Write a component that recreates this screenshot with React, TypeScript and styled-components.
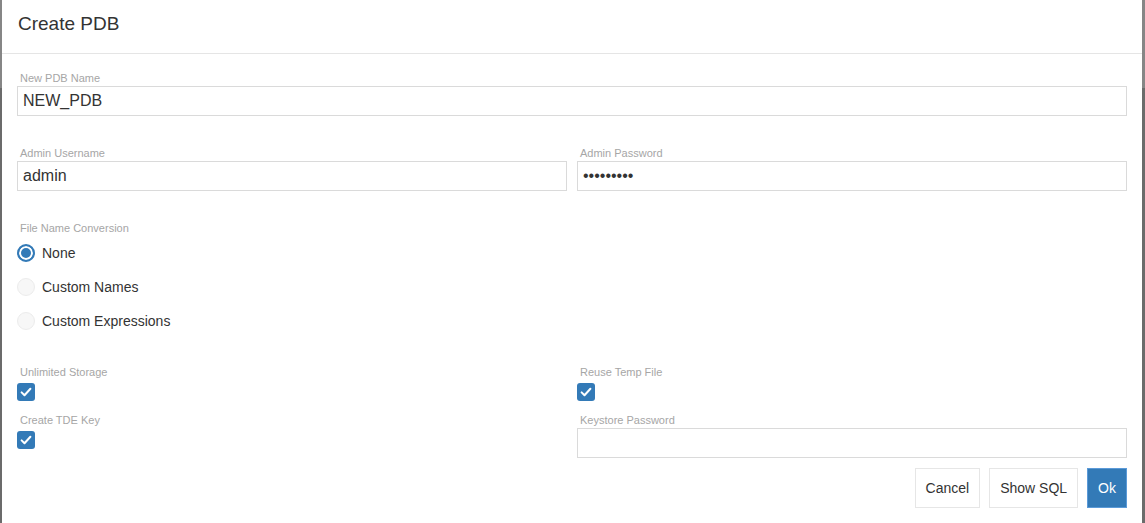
import React from "react";
import styled, { createGlobalStyle } from "styled-components";

const GlobalStyle = createGlobalStyle`
  html, body {
    margin: 0;
    padding: 0;
    background: #ffffff;
  }
  body {
    font-family: "Liberation Sans", Arial, Helvetica, sans-serif;
    color: #333333;
  }
  * { box-sizing: border-box; }
`;

const Frame = styled.div`
  height: 100vh;
  display: flex;
  padding: 0 3px 0 2px;
  background: linear-gradient(to bottom, #868686 0, #868686 88px, #6b6b6b 88px, #6b6b6b 100%);
`;

const Dialog = styled.div`
  flex: 1;
  background: #ffffff;
  display: flex;
  flex-direction: column;
  overflow: hidden;
`;

const Header = styled.div`
  padding: 10px 16px 16px;
  border-bottom: 1px solid #e5e5e5;
`;

const Title = styled.h4`
  margin: 0;
  font-size: 19px;
  line-height: 27px;
  font-weight: normal;
  color: #333333;
`;

const Body = styled.div`
  padding: 18px 15px 0;
  display: flex;
  flex-direction: column;
`;

const Section = styled.div<{ $mb?: number }>`
  margin-bottom: ${(p) => p.$mb ?? 0}px;
`;

const TwoCols = styled.div<{ $rowGap?: number }>`
  display: grid;
  grid-template-columns: 1fr 1fr;
  column-gap: 10px;
  row-gap: ${(p) => p.$rowGap ?? 0}px;
`;

const Field = styled.div`
  display: flex;
  flex-direction: column;
  align-items: flex-start;
`;

const Label = styled.label<{ $gap?: number }>`
  display: block;
  padding-left: 3px;
  font-size: 11px;
  line-height: 13px;
  color: #a6a6a6;
  margin-bottom: ${(p) => p.$gap ?? 1}px;
`;

const TextInput = styled.input`
  width: 100%;
  height: 30px;
  border: 1px solid #dadada;
  border-radius: 0;
  padding: 0 5px;
  font-family: "Liberation Sans", Arial, sans-serif;
  font-size: 16px;
  color: #333333;
  background: #ffffff;
  outline: none;
`;

const RadioList = styled.div`
  display: flex;
  flex-direction: column;
`;

const RadioRow = styled.label`
  height: 34px;
  display: flex;
  align-items: center;
  gap: 7px;
  font-size: 14px;
  color: #333333;
  cursor: pointer;
`;

const RadioDot = styled.span<{ $checked?: boolean }>`
  width: 18px;
  height: 18px;
  border-radius: 50%;
  flex: none;
  border: ${(p) => (p.$checked ? "2px solid #337ab7" : "1px solid #ececec")};
  background: ${(p) => (p.$checked ? "#337ab7" : "#f7f7f7")};
  box-shadow: ${(p) => (p.$checked ? "inset 0 0 0 2px #ffffff" : "none")};
`;

const CheckBox = styled.span`
  width: 18px;
  height: 18px;
  border-radius: 3px;
  background: #337ab7;
  display: flex;
  align-items: center;
  justify-content: center;
`;

const Footer = styled.div`
  margin-top: 10px;
  display: flex;
  justify-content: flex-end;
  gap: 9px;
`;

const Button = styled.button<{ $primary?: boolean }>`
  height: 40px;
  padding: 0 10px;
  font-family: "Liberation Sans", Arial, sans-serif;
  font-size: 14px;
  border-radius: 0;
  border: 1px solid ${(p) => (p.$primary ? "#5b9ad8" : "#e6e6e6")};
  background: ${(p) => (p.$primary ? "#337ab7" : "#ffffff")};
  color: ${(p) => (p.$primary ? "#ffffff" : "#333333")};
  cursor: pointer;
`;

const Check = () => (
  <CheckBox>
    <svg width="12" height="12" viewBox="0 0 12 12">
      <polyline
        points="1.6,6.4 4.5,9.2 10.4,2.8"
        fill="none"
        stroke="#ffffff"
        strokeWidth="2"
        strokeLinecap="round"
        strokeLinejoin="round"
      />
    </svg>
  </CheckBox>
);

export default function App() {
  const options = ["None", "Custom Names", "Custom Expressions"];
  return (
    <>
      <GlobalStyle />
      <Frame>
        <Dialog>
          <Header>
            <Title>Create PDB</Title>
          </Header>
          <Body>
            <Section $mb={31}>
              <Field>
                <Label>New PDB Name</Label>
                <TextInput defaultValue="NEW_PDB" />
              </Field>
            </Section>
            <Section $mb={31}>
              <TwoCols>
                <Field>
                  <Label>Admin Username</Label>
                  <TextInput defaultValue="admin" />
                </Field>
                <Field>
                  <Label>Admin Password</Label>
                  <TextInput type="password" defaultValue="adminpass" />
                </Field>
              </TwoCols>
            </Section>
            <Section $mb={28}>
              <Label $gap={1}>File Name Conversion</Label>
              <RadioList>
                {options.map((o, i) => (
                  <RadioRow key={o}>
                    <RadioDot $checked={i === 0} />
                    {o}
                  </RadioRow>
                ))}
              </RadioList>
            </Section>
            <TwoCols $rowGap={13}>
              <Field>
                <Label $gap={4}>Unlimited Storage</Label>
                <Check />
              </Field>
              <Field>
                <Label $gap={4}>Reuse Temp File</Label>
                <Check />
              </Field>
              <Field>
                <Label $gap={4}>Create TDE Key</Label>
                <Check />
              </Field>
              <Field>
                <Label $gap={1}>Keystore Password</Label>
                <TextInput type="password" />
              </Field>
            </TwoCols>
            <Footer>
              <Button>Cancel</Button>
              <Button>Show SQL</Button>
              <Button $primary>Ok</Button>
            </Footer>
          </Body>
        </Dialog>
      </Frame>
    </>
  );
}
